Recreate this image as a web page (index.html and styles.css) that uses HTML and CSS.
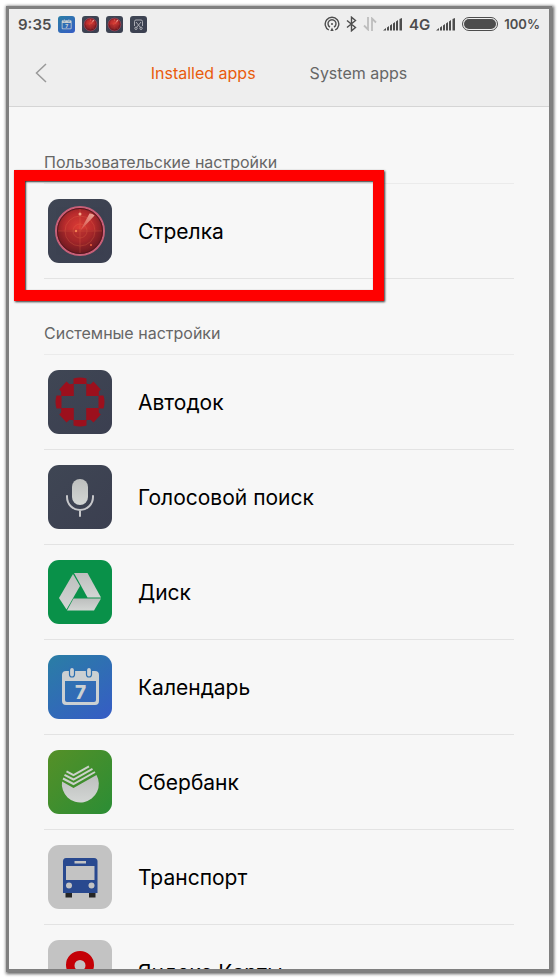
FILE: index.html
```html
<!doctype html>
<html lang="ru">

<head>
  <meta charset="UTF-8" />
  <meta name="viewport" content="width=device-width, initial-scale=1.0" />
  <title>Installed apps</title>
  <link rel="stylesheet" href="styles.css">
</head>

<body>
  <!-- shared icons -->
  <svg class="sprite" aria-hidden="true">
    <defs>
      <radialGradient id="radar-fill" cx="0.48" cy="0.42" r="0.6">
        <stop offset="0" stop-color="#dc3d36" />
        <stop offset="0.5" stop-color="#b92c2d" />
        <stop offset="1" stop-color="#641820" />
      </radialGradient>
      <linearGradient id="beam" x1="1" y1="0" x2="0" y2="1">
        <stop offset="0" stop-color="#eda89a" />
        <stop offset="1" stop-color="#d74c43" />
      </linearGradient>
      <linearGradient id="silver" x1="0" y1="0" x2="0" y2="1">
        <stop offset="0" stop-color="#bdbfbe" />
        <stop offset="1" stop-color="#d3d6d4" />
      </linearGradient>
    </defs>
    <symbol id="radar" viewBox="0 0 64 64">
      <circle cx="32" cy="32" r="24" fill="url(#radar-fill)" stroke="#c96078" stroke-width="2" />
      <circle cx="32" cy="32" r="22.500" fill="none" stroke="#571821" stroke-width="1" />
      <path d="M10 32Q32 29 54 32Q51 54 32 54Q13 54 10 32Z" fill="#551520" opacity=".2" />
      <g fill="none" stroke="#ee7a50" stroke-width=".6" opacity=".4">
        <circle cx="32" cy="32" r="15" />
        <circle cx="32" cy="32" r="7" />
        <path d="M32 10v44M10 32h44" />
      </g>
      <path d="M32 32L41.500 14.500Q44 14 46.500 16.500Z" fill="url(#beam)" />
      <circle cx="32" cy="15" r="1.500" fill="#f4a88b" />
      <circle cx="28" cy="32" r="1.200" fill="#f38252" />
      <circle cx="43" cy="46" r="1" fill="#f0643c" />
    </symbol>
    <symbol id="calendar" viewBox="0 0 64 64">
      <path d="M18 16H47Q51 16 51 20V46Q51 50 47 50H18Q14 50 14 46V20Q14 16 18 16ZM17 26V45Q17 47 19 47H46Q48 47 48 45V26Z" fill="#cbd0d2" fill-rule="evenodd" />
      <g fill="#cbd0d2" stroke="#2b6fb0" stroke-width="1.200">
        <rect x="21.500" y="12.500" width="5" height="9.500" rx="2.500" />
        <rect x="38.500" y="12.500" width="5" height="9.500" rx="2.500" />
      </g>
      <text x="32.500" y="44" class="calendar-day">7</text>
    </symbol>
    <symbol id="signal" viewBox="0 0 20 13">
      <path d="M0 12.500L3 10V12.500ZM4 9.500L6 8V12.500H4ZM7 7.500L9 6V12.500H7ZM10 5.500L12 4V12.500H10ZM13 3.500L15 2V12.500H13ZM16.500 1L19 0V12.500H16.500Z" />
    </symbol>
  </svg>

  <div class="phone">
    <header class="header">
      <div class="status">
        <span class="time">9:35</span>
        <div class="notices">
          <svg class="mini blue"><use href="#calendar" /></svg>
          <svg class="mini dark"><use href="#radar" /></svg>
          <svg class="mini dark"><use href="#radar" /></svg>
          <svg class="mini dark" viewBox="0 0 17 17" fill="none" stroke="#b5b7bd" stroke-width=".9">
            <path d="M4.500 10V5.500Q4.500 4 6 4H11Q12.500 4 12.500 5.500V10" />
            <path d="M6 6L10.500 11.500M11 6L6.500 11.500" />
            <circle cx="6" cy="12.300" r="1.200" />
            <circle cx="11" cy="12.300" r="1.200" />
          </svg>
        </div>
        <div class="system">
          <svg width="16" height="16" viewBox="0 0 16 16" fill="none" stroke="#4d4d4d" stroke-width="1.400">
            <path d="M4.800 14A6.800 6.800 0 1 1 11.200 14" />
            <path d="M6 11.200A4 4 0 1 1 10 11.200" />
            <circle cx="8" cy="8" r="1" fill="#4d4d4d" stroke="none" />
            <path d="M8 11.500L6.300 15H9.700Z" fill="#4d4d4d" stroke="none" />
          </svg>
          <svg width="11" height="16" viewBox="0 0 11 16" fill="none" stroke="#4d4d4d" stroke-width="1.400">
            <path d="M1 4.500L9.500 11.500L5.500 14.800V1.200L9.500 4.500L1 11.500" />
          </svg>
          <svg width="14" height="14" viewBox="0 0 14 14" fill="none" stroke="#bdbdbd" stroke-width="1.800">
            <path d="M5 0V12.500L1 8.500M9 14V1.500L13 5.500" />
          </svg>
          <svg class="signal"><use href="#signal" /></svg>
          <span class="network">4G</span>
          <svg class="signal"><use href="#signal" /></svg>
          <span class="battery"></span>
          <span class="percent">100%</span>
        </div>
      </div>
      <nav class="nav">
        <button class="back" aria-label="Back">
          <svg width="12" height="20" viewBox="0 0 12 20" fill="none" stroke="#999" stroke-width="1.500">
            <path d="M11 1L1.500 10L11 19" />
          </svg>
        </button>
        <div class="tabs">
          <button class="tab active">Installed apps</button>
          <button class="tab">System apps</button>
        </div>
      </nav>
    </header>

    <main class="list">
      <h2 class="title">Пользовательские настройки</h2>
      <a class="app marked" href="#">
        <svg class="icon dark"><use href="#radar" /></svg>
        <span>Стрелка</span>
      </a>

      <h2 class="title">Системные настройки</h2>
      <a class="app" href="#">
        <svg class="icon dark" viewBox="0 0 64 64" fill="#9c101d">
          <path d="M25.500 8.500Q32 6.500 38.500 8.500V14H25.500ZM25.500 55.500Q32 57.500 38.500 55.500V50H25.500ZM8.500 25.500Q6.500 32 8.500 38.500H13.500V25.500ZM55.500 25.500Q57.500 32 55.500 38.500H50.500V25.500Z" />
          <path id="tooth" d="M25.800 13.700V26H13.200V21.500L11.200 19.500L18.500 11.500L21.500 14.200Z" />
          <use href="#tooth" transform="matrix(-1 0 0 1 64 0)" />
          <use href="#tooth" transform="matrix(1 0 0 -1 0 64)" />
          <use href="#tooth" transform="matrix(-1 0 0 -1 64 64)" />
        </svg>
        <span>Автодок</span>
      </a>
      <a class="app" href="#">
        <svg class="icon dark" viewBox="0 0 64 64">
          <rect x="24" y="14" width="16" height="26" rx="8" fill="url(#silver)" />
          <path d="M19 31V32A13 13 0 0 0 45 32V31M32 45V51" fill="none" stroke="#c6c7ca" stroke-width="2" stroke-linecap="round" />
        </svg>
        <span>Голосовой поиск</span>
      </a>
      <a class="app" href="#">
        <svg class="icon green" viewBox="0 0 64 64" fill="url(#silver)">
          <path d="M25 14L32 26L18.500 49.500L11 38Z" />
          <path d="M26 13H39.500L53 37.500H39.500Z" />
          <path d="M25.500 38.500H53L46 50.500H19Z" />
        </svg>
        <span>Диск</span>
      </a>
      <a class="app" href="#">
        <svg class="icon blue"><use href="#calendar" /></svg>
        <span>Календарь</span>
      </a>
      <a class="app" href="#">
        <svg class="icon lime" viewBox="0 0 64 64">
          <path d="M14 31.500L25.500 38L48.500 25A18.500 18.500 0 1 1 14 31.500Z" fill="url(#silver)" />
          <path d="M18.500 21.300L25.500 25.200L41 16.300M16.500 24.800L25.500 29.500L44.500 18.800M15 28.500L25.500 34L47 22" fill="none" stroke="#cbd1ca" stroke-width="2" />
        </svg>
        <span>Сбербанк</span>
      </a>
      <a class="app" href="#">
        <svg class="icon gray" viewBox="0 0 64 64">
          <path d="M17.500 47H24V52.500H17.500ZM41 47H47.500V52.500H41Z" fill="#252525" />
          <path d="M18 13H46Q49.500 13 49.500 16.500V48H15V16.500Q15 13 18 13Z" fill="#29498f" />
          <path d="M26.500 16H38V18.500H26.500ZM18 21H46.500V35H18Z" fill="#c3c3c3" />
          <circle cx="21" cy="40.500" r="3" fill="#c3c3c3" />
          <circle cx="43.500" cy="40.500" r="3" fill="#c3c3c3" />
        </svg>
        <span>Транспорт</span>
      </a>
      <a class="app" href="#">
        <svg class="icon gray" viewBox="0 0 64 64">
          <path d="M32 11A14 14 0 0 1 46 25C46 36 34 39 32 55C30 39 18 36 18 25A14 14 0 0 1 32 11ZM32 20A5.500 5.500 0 1 0 32 31A5.500 5.500 0 1 0 32 20Z" fill="#c40006" fill-rule="evenodd" />
        </svg>
        <span>Яндекс.Карты</span>
      </a>
    </main>
  </div>
</body>

</html>
```

FILE: styles.css
```css
* {
  box-sizing: border-box;
}

body {
  margin: 0;
  padding: 6px;
  height: 100vh;
  background-color: #fff;
  font-family: Inter, "Noto Sans", sans-serif;
}

svg {
  display: block;
  flex-shrink: 0;
}

button {
  padding: 0;
  border: 0;
  background: none;
  font: inherit;
  cursor: pointer;
}

.sprite {
  position: absolute;
  width: 0;
  height: 0;
}

.phone {
  height: 100%;
  display: flex;
  flex-direction: column;
  overflow: hidden;
  border: 3px solid #808080;
  background-color: #f7f7f7;
  box-shadow: 1px 1px 3px 1px #666;
}

.header {
  flex-shrink: 0;
  background-color: #eee;
  border-bottom: 1px solid #d5d5d5;
}

/* status bar */
.status {
  height: 30px;
  padding: 0 9px;
  display: flex;
  align-items: center;
  color: #4d4d4d;
  font-size: 15px;
  font-weight: 600;
}

.notices {
  display: flex;
  gap: 7px;
  margin-left: 7px;
}

.mini {
  width: 17px;
  height: 17px;
  border-radius: 3px;
}

.system {
  display: flex;
  align-items: center;
  gap: 6px;
  margin-left: auto;
}

.signal {
  width: 20px;
  height: 13px;
  fill: #4d4d4d;
}

.battery {
  width: 36px;
  height: 14px;
  border: 1px solid #4d4d4d;
  border-radius: 7px;
  padding: 1px;
  background-color: #4d4d4d;
  background-clip: content-box;
}

.percent {
  font-size: 13px;
}

/* tabs */
.nav {
  height: 67px;
  padding: 0 26px;
  display: grid;
  grid-template-columns: 1fr auto 1fr;
  align-items: center;
}

.back {
  justify-self: start;
}

.tabs {
  display: flex;
  gap: 54px;
}

.tab {
  color: #666;
  font-size: 16px;
  line-height: 24px;
}

.tab.active {
  color: #e95c0c;
}

/* apps */
.list {
  flex: 1;
  min-height: 0;
  overflow: hidden;
  padding: 1px 35px 0;
}

.title {
  margin: 0;
  padding: 42px 0 9px;
  border-bottom: 1px solid #ebebeb;
  color: #666;
  font-size: 16px;
  font-weight: 400;
  line-height: 24px;
}

.app {
  position: relative;
  display: flex;
  align-items: center;
  gap: 26px;
  padding: 15px 4px;
  border-bottom: 1px solid #e3e3e3;
  color: #000;
  font-size: 21px;
  text-decoration: none;
}

.marked::after {
  content: "";
  position: absolute;
  top: -14px;
  right: 130px;
  bottom: -23px;
  left: -30px;
  border: 11px solid #f00;
  box-shadow: 1px 1px 2px #333, inset 1px 1px 2px #333;
}

.icon {
  width: 64px;
  height: 64px;
  border-radius: 11px;
}

.dark {
  background: linear-gradient(135deg, #3f4654, #3b3f50);
}

.green {
  background-color: #099149;
}

.blue {
  background: linear-gradient(145deg, #2a7ea5, #365cc5);
}

.lime {
  background: linear-gradient(135deg, #559027, #2b8d35);
}

.gray {
  background-color: #c3c3c3;
}

.calendar-day {
  fill: #cbd0d2;
  font-size: 19px;
  font-weight: 800;
  text-anchor: middle;
}
```
